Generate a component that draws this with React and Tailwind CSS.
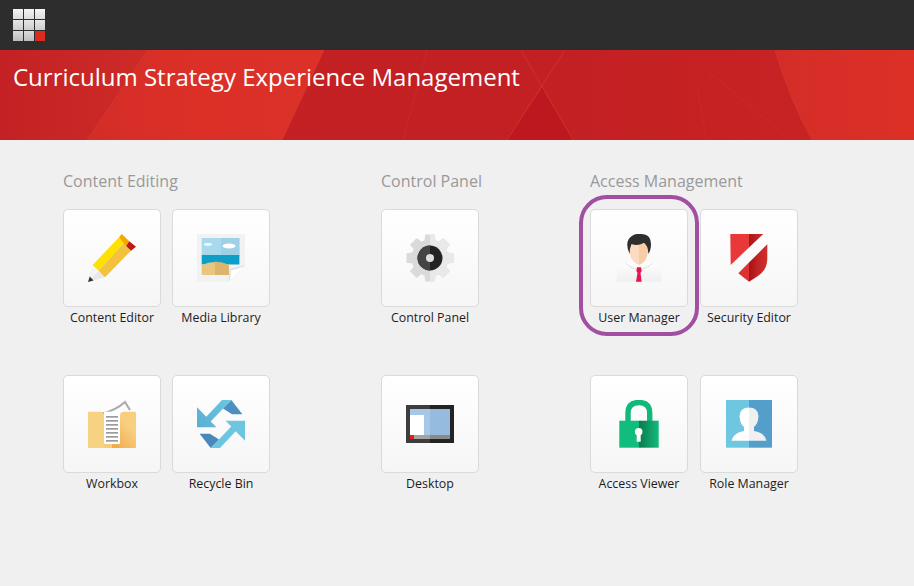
const gearPath = (() => {
  const pts = []
  for (let i = 0; i < 8; i++) {
    const a = (i * Math.PI) / 4 - Math.PI / 2
    const at = (r, d) => `${(24 + r * Math.cos(a + d)).toFixed(2)},${(24 + r * Math.sin(a + d)).toFixed(2)}`
    pts.push(at(18.5, -0.3), at(24, -0.2), at(24, 0.2), at(18.5, 0.3))
  }
  return pts.join(' ')
})()

function Icon({ children }) {
  return (
    <svg viewBox="0 0 48 48" className="w-12 h-12 block">
      {children}
    </svg>
  )
}

function PencilIcon() {
  return (
    <Icon>
      <polygon points="4.7,31 17,43.3 0,48" fill="#e8e8e8" />
      <polygon points="4.7,31 10.8,37 0,48" fill="#f4f4f4" />
      <polygon points="1.8,42.5 5.5,46.4 0,48" fill="#333" />
      <polygon points="4.7,31 31,3.3 36,8.7 10.7,36.7" fill="#ffe100" />
      <polygon points="36,8.7 38,12 43,16.7 17,43.3 10.7,36.7" fill="#f2c23e" />
      <polygon points="33.7,0 41.3,7.3 38,12 31,3.3" fill="#f7a600" />
      <polygon points="41.3,7.3 48,12.7 43,16.7 38,12" fill="#bf1a12" />
    </Icon>
  )
}

function MediaIcon() {
  return (
    <Icon>
      <polygon points="0,0 48,0 48,31 32,48 0,48" fill="#f2f2f2" />
      <rect x="4.7" y="4" width="37.7" height="17.5" fill="#a9d9ed" />
      <rect x="24" y="4" width="18.4" height="17.5" fill="#9ed0e6" />
      <ellipse cx="32" cy="12" rx="6.5" ry="2.4" fill="#fff" />
      <ellipse cx="11" cy="10.5" rx="4" ry="1.4" fill="#fff" opacity="0.85" />
      <rect x="4.7" y="21" width="37.7" height="9.5" fill="#0e9fc9" />
      <path d="M4.7 31 Q18 25 32 31 V41 H4.7 Z" fill="#e8c67f" />
      <path d="M18 27.5 Q26 28 32 31 V41 H18 Z" fill="#dcb46b" />
      <polygon points="32,47 32,35 48,31" fill="#fff" />
      <polygon points="31.7,47.5 32.5,35 48,31 47,32.5 34,36.5 33,46" fill="#dedede" />
    </Icon>
  )
}

function WorkboxIcon() {
  return (
    <Icon>
      <defs>
        <linearGradient id="wbRight" x1="24" y1="48" x2="44" y2="30" gradientUnits="userSpaceOnUse">
          <stop offset="0" stopColor="#f1a746" />
          <stop offset="1" stopColor="#f8cf7f" />
        </linearGradient>
      </defs>
      <path d="M14.5 13.5 Q28 10 37 2 L42 10" fill="none" stroke="#a9a9a9" strokeWidth="2" />
      <path d="M1 11.7 H12 Q16 11.7 16 16 V48 H1 Q0 48 0 47 V12.7 Q0 11.7 1 11.7 Z" fill="#f7d283" />
      <rect x="16" y="42" width="8" height="6" fill="#f6cc7a" />
      <path d="M36 11.7 H47 Q48 11.7 48 12.7 V47 Q48 48 47 48 H24 V44 H32 V16 Q32 11.7 36 11.7 Z" fill="url(#wbRight)" />
      <rect x="16" y="11.7" width="16" height="32.3" fill="#fff" />
      {[16, 20, 24, 28, 32, 36, 40].map(y => (
        <rect key={y} x="18" y={y} width="12" height="1.7" fill="#9b9b9b" />
      ))}
    </Icon>
  )
}

function RecycleIcon() {
  return (
    <Icon>
      <defs>
        <linearGradient id="rcA" x1="0" y1="27" x2="34" y2="0" gradientUnits="userSpaceOnUse">
          <stop offset="0" stopColor="#5aaed3" />
          <stop offset="1" stopColor="#6cc6e2" />
        </linearGradient>
      </defs>
      <polygon points="34.3,0 45.4,14.3 35,14.3 26,8.5" fill="#4c8fc0" />
      <polygon points="25,0 9.3,16.7 0,7.3 0,27.3 19.4,27.3 13.7,21.4 34.3,0" fill="url(#rcA)" />
      <polygon points="13.7,48 2.6,33.7 13,33.7 22,39.5" fill="#4a88b9" />
      <polygon points="23,48 38.7,31.3 48,40.7 48,20.7 28.6,20.7 34.3,26.6 13.7,48" fill="#6cc6e2" />
    </Icon>
  )
}

function GearIcon() {
  return (
    <Icon>
      <defs>
        <clipPath id="gearRight">
          <rect x="24" y="0" width="24" height="48" />
        </clipPath>
      </defs>
      <polygon points={gearPath} fill="#dadada" />
      <polygon points={gearPath} fill="#e9e9e9" clipPath="url(#gearRight)" />
      <circle cx="24" cy="24" r="12.5" fill="#232323" />
      <path d="M24 11.5 A12.5 12.5 0 0 0 24 36.5 Z" fill="#444" />
      <circle cx="24" cy="24" r="4" fill="#dedede" />
    </Icon>
  )
}

function DesktopIcon() {
  return (
    <Icon>
      <rect x="0" y="5" width="24" height="38" fill="#3d3d3d" />
      <rect x="24" y="5" width="24" height="38" fill="#232323" />
      <rect x="4" y="9" width="20" height="26" fill="#a6c8e6" />
      <rect x="24" y="9" width="20" height="26" fill="#95bbdf" />
      <rect x="4" y="15" width="14" height="20" fill="#fff" />
      <rect x="4" y="35" width="20" height="4" fill="#a3a3a3" />
      <rect x="24" y="35" width="20" height="4" fill="#8a8a8a" />
      <rect x="4" y="35" width="4" height="4" fill="#e0201a" />
    </Icon>
  )
}

function UserIcon() {
  return (
    <Icon>
      <defs>
        <linearGradient id="shirt" x1="0" y1="0" x2="0" y2="1">
          <stop offset="0" stopColor="#ffffff" />
          <stop offset="1" stopColor="#efefef" />
        </linearGradient>
      </defs>
      <path d="M1.7 47.7 V36 Q2 32 8 30.5 L17 27 H31 L40 30.5 Q46 32 46.3 36 V47.7 Z" fill="url(#shirt)" />
      <path d="M11 29.5 Q24 41 37 29.5" fill="none" stroke="#bbb" strokeWidth="0.8" strokeDasharray="1 1" />
      <path d="M14.6 10 H24 V31 Q15 28 14.6 16 Z" fill="#fbdabd" />
      <path d="M24 10 H33 V16 Q32.6 28 24 31 Z" fill="#f8cda6" />
      <path d="M14.6 20 Q10.5 11 13.5 5.5 Q18 -1 26 0 Q31 0 34 3 Q37.5 8 35 17 L33.2 20 Q33.5 12 29 9 Q22 12.5 16.5 10 Q14.6 14 14.6 20 Z" fill="#2e2e2e" />
      <polygon points="22,33.3 26,33.3 26.7,37 25.5,39 26.7,47.7 21,47.7 22.5,39 21.4,37" fill="#e8134f" />
    </Icon>
  )
}

function ShieldIcon() {
  return (
    <Icon>
      <defs>
        <linearGradient id="shTop" x1="24" y1="0" x2="38" y2="0" gradientUnits="userSpaceOnUse">
          <stop offset="0" stopColor="#a91516" />
          <stop offset="1" stopColor="#d22c2d" />
        </linearGradient>
        <linearGradient id="shLow" x1="24" y1="0" x2="42" y2="0" gradientUnits="userSpaceOnUse">
          <stop offset="0" stopColor="#a51314" />
          <stop offset="0.5" stopColor="#c42425" />
          <stop offset="1" stopColor="#d02c2c" />
        </linearGradient>
      </defs>
      <polygon points="5.3,0 24,0 24,13.4 5.7,31" fill="#e8383a" />
      <polygon points="24,0 38.3,0 24,13.4" fill="url(#shTop)" />
      <path d="M24 28.6 L42.3 10.3 V25 Q42 36 33 42 L24 47.7 Z" fill="url(#shLow)" />
      <polygon points="24,28.6 24,47.7 13.3,39.3" fill="#e03132" />
    </Icon>
  )
}

function LockIcon() {
  return (
    <Icon>
      <defs>
        <linearGradient id="lockBody" x1="24" y1="0" x2="44" y2="0" gradientUnits="userSpaceOnUse">
          <stop offset="0" stopColor="#0a7a4c" />
          <stop offset="1" stopColor="#13bb7c" />
        </linearGradient>
      </defs>
      <path d="M13 22 V13 Q13 2.5 24 2.5 Q34.7 2.5 34.7 13 V22" fill="none" stroke="#10b87a" strokeWidth="5.4" />
      <rect x="4.3" y="20.7" width="19.7" height="27" fill="#10bd7c" />
      <rect x="24" y="20.7" width="19.7" height="27" fill="url(#lockBody)" />
      <circle cx="23.7" cy="31.7" r="3.8" fill="#fff" />
      <rect x="21.7" y="32" width="4" height="9.7" fill="#fff" />
    </Icon>
  )
}

function RoleIcon() {
  return (
    <Icon>
      <rect x="1" y="0" width="23" height="47.7" fill="#6fc6e0" />
      <rect x="24" y="0" width="23" height="47.7" fill="#549fc9" />
      <path d="M24 7.5 Q15 7.5 14.5 16 Q15 24 19 27 V31 Q8 33 6.5 40.7 H24 Z" fill="#fff" />
      <path d="M24 7.5 Q33 7.5 33.5 16 Q33 24 29 27 V31 Q40 33 41.5 40.7 H24 Z" fill="#f0f0f0" />
    </Icon>
  )
}

const groups = [
  {
    title: 'Content Editing',
    width: 'w-[207px]',
    gap: 'gap-x-[11px]',
    cols: 'grid-cols-2',
    tiles: [
      { label: 'Content Editor', icon: <PencilIcon /> },
      { label: 'Media Library', icon: <MediaIcon /> },
      { label: 'Workbox', icon: <WorkboxIcon /> },
      { label: 'Recycle Bin', icon: <RecycleIcon /> },
    ],
  },
  {
    title: 'Control Panel',
    width: 'w-[98px]',
    gap: '',
    cols: 'grid-cols-1',
    tiles: [
      { label: 'Control Panel', icon: <GearIcon /> },
      { label: 'Desktop', icon: <DesktopIcon /> },
    ],
  },
  {
    title: 'Access Management',
    width: 'w-[208px]',
    gap: 'gap-x-3',
    cols: 'grid-cols-2',
    tiles: [
      { label: 'User Manager', icon: <UserIcon />, highlight: true },
      { label: 'Security Editor', icon: <ShieldIcon /> },
      { label: 'Access Viewer', icon: <LockIcon /> },
      { label: 'Role Manager', icon: <RoleIcon /> },
    ],
  },
]

const logoCells = [
  'from-[#f4f4f4] to-[#dcdcdc]', 'from-[#f4f4f4] to-[#dcdcdc]', 'from-[#f4f4f4] to-[#dcdcdc]',
  'from-[#e6e6e6] to-[#cdcdcd]', 'from-[#e6e6e6] to-[#cdcdcd]', 'from-[#e6e6e6] to-[#cdcdcd]',
  'from-[#dadada] to-[#bcbcbc]', 'from-[#dadada] to-[#bcbcbc]', 'from-[#dc2a1e] to-[#dc2a1e]',
]

function BannerArt() {
  return (
    <svg viewBox="0 0 914 90" preserveAspectRatio="none" className="absolute inset-0 w-full h-full">
      <defs>
        <linearGradient id="left" x1="0" y1="0" x2="1" y2="0">
          <stop offset="0" stopColor="#c42124" />
          <stop offset="1" stopColor="#cd2b28" />
        </linearGradient>
        <linearGradient id="band" x1="0" y1="0" x2="1" y2="0">
          <stop offset="0" stopColor="#d32d28" />
          <stop offset="0.5" stopColor="#dc3027" />
          <stop offset="1" stopColor="#db3128" />
        </linearGradient>
        <linearGradient id="mid" x1="0" y1="0" x2="1" y2="0">
          <stop offset="0" stopColor="#c52124" />
          <stop offset="0.6" stopColor="#c32023" />
          <stop offset="1" stopColor="#c92424" />
        </linearGradient>
        <linearGradient id="right" x1="0" y1="0" x2="1" y2="0">
          <stop offset="0" stopColor="#d42d28" />
          <stop offset="1" stopColor="#dc3026" />
        </linearGradient>
      </defs>
      <rect width="914" height="90" fill="url(#mid)" />
      <polygon points="0,0 148,0 87,90 0,90" fill="url(#left)" />
      <polygon points="148,0 324,0 282,90 87,90" fill="url(#band)" />
      <polygon points="542,38 507,90 573,90" fill="#bd181f" />
      <path d="M775 0 Q790 50 812 90 H914 V0 Z" fill="url(#right)" />
      <g fill="none" stroke="#e0402f" strokeWidth="1" opacity="0.5">
        <path d="M148 0 L87 90" />
        <path d="M324 0 L282 90" />
        <path d="M565 0 L507 90" />
        <path d="M521 0 L573 90" />
        <path d="M775 0 Q790 50 812 90" />
      </g>
      <g fill="none" stroke="#d83a30" strokeWidth="1" opacity="0.3">
        <path d="M427 0 L403 90" />
        <path d="M697 38 L707 90" />
        <path d="M707 20 L790 90" />
      </g>
    </svg>
  )
}

function Tile({ label, icon, highlight }) {
  return (
    <div className="relative w-[98px] h-[166px] flex flex-col items-center">
      {highlight && (
        <div className="absolute -left-[11px] -top-[14px] w-[120px] h-[141px] border-4 border-[#a24fa3] rounded-[28px] pointer-events-none" />
      )}
      <div className="w-[98px] h-[98px] flex items-center justify-center bg-linear-to-b from-white to-[#f6f6f6] border border-[#dadada] rounded-[5px]">
        {icon}
      </div>
      <span className="mt-px text-[12.4px] leading-[20px] whitespace-nowrap text-[#1c1c24]">{label}</span>
    </div>
  )
}

export default function App() {
  return (
    <div className="h-[586px] overflow-hidden bg-[#f0f0f0]" style={{ fontFamily: "'Open Sans', sans-serif" }}>
      <div className="h-[50px] bg-[#2d2d2d] flex items-center pl-[13px]">
        <div className="grid grid-cols-3 gap-px w-8">
          {logoCells.map((c, i) => (
            <div key={i} className={`h-2.5 bg-linear-to-b ${c}`} />
          ))}
        </div>
      </div>
      <div className="relative h-[90px] overflow-hidden">
        <BannerArt />
        <h1 className="relative pl-[13px] pt-[9px] text-[24px] leading-[36px] text-white font-normal">
          Curriculum Strategy Experience Management
        </h1>
      </div>
      <div className="flex gap-[111px] pl-[63px] pt-[29px]">
        {groups.map(g => (
          <div key={g.title} className={g.width}>
            <h2 className="h-10 text-[16px] leading-6 text-[#999] font-normal whitespace-nowrap">{g.title}</h2>
            <div className={`grid ${g.cols} ${g.gap}`}>
              {g.tiles.map(t => (
                <Tile key={t.label} {...t} />
              ))}
            </div>
          </div>
        ))}
      </div>
    </div>
  )
}
